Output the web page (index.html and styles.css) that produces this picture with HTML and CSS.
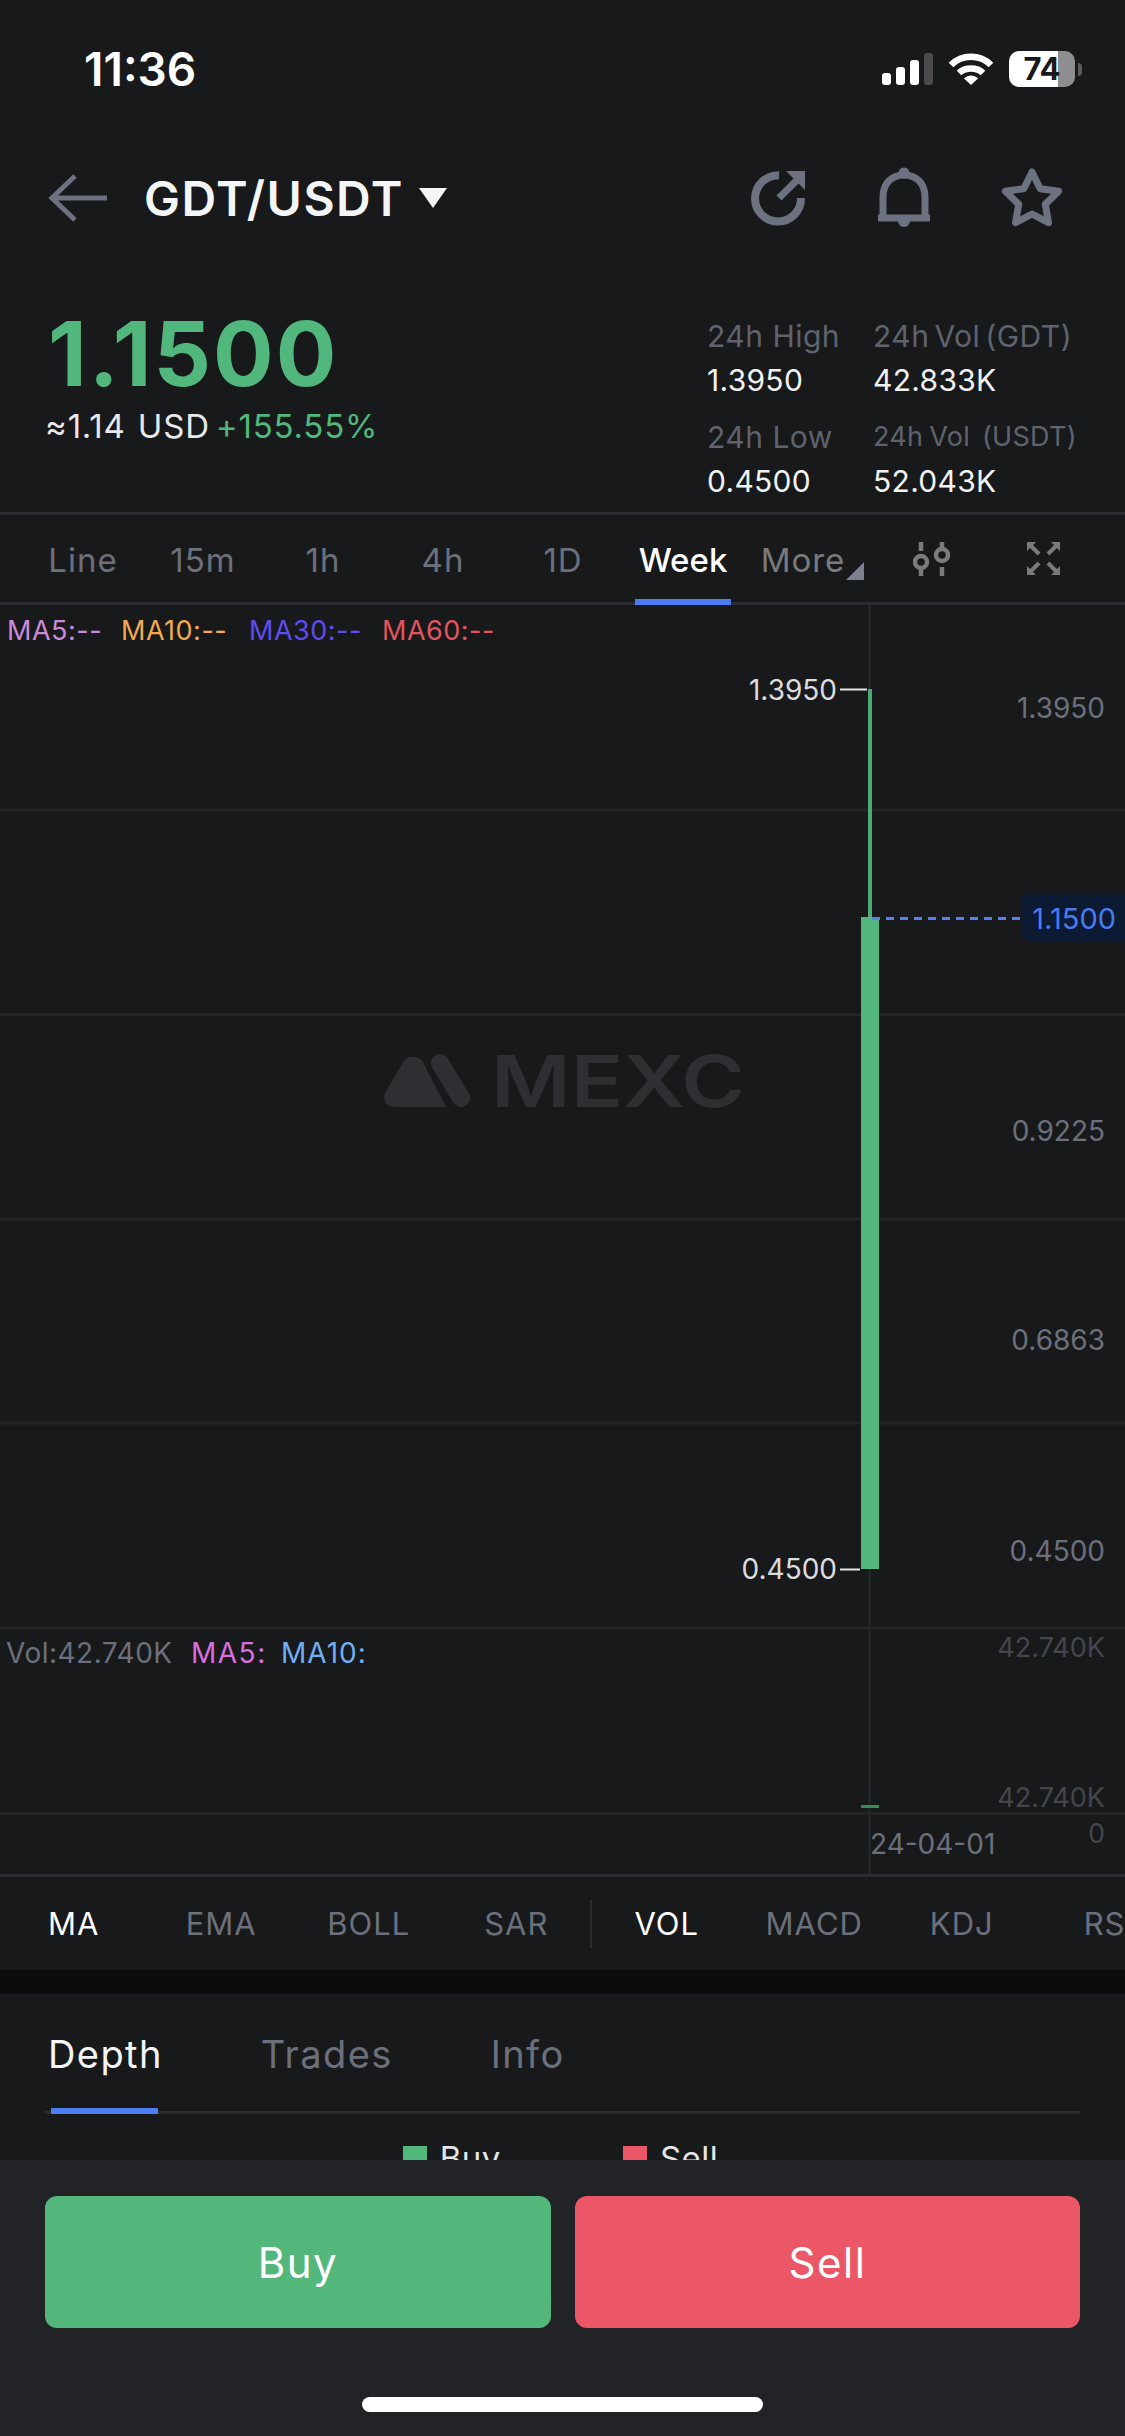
FILE: index.html
```html
<!DOCTYPE html>
<html lang="en">
<head>
    <meta charset="UTF-8">
    <meta name="viewport" content="width=device-width, initial-scale=1.0">
    <title>GDT/USDT</title>
    <link rel="stylesheet" href="styles.css">
</head>
<body>

<div class="status-bar">
    <span class="time">11:36</span>
    <div class="status-icons">
        <svg class="signal" width="51" height="32" viewBox="0 0 51 32">
            <rect x="0" y="20" width="9" height="12" rx="3" fill="#fff"/>
            <rect x="14" y="14" width="9" height="18" rx="3" fill="#fff"/>
            <rect x="28" y="7" width="9" height="25" rx="3" fill="#fff"/>
            <rect x="42" y="0" width="9" height="32" rx="3" fill="#4b4b4d"/>
        </svg>
        <svg class="wifi" width="46" height="34" viewBox="0 0 46 34" fill="none" stroke="#fff" stroke-width="6.5">
            <path d="M3 13 C14 2 32 2 43 13"/>
            <path d="M11 21 C17 15 29 15 35 21"/>
            <path d="M16 26.500 L23 33 L30 26.500 C26 22.500 20 22.500 16 26.500 Z" fill="#fff" stroke="none"/>
        </svg>
        <div class="battery">
            <div class="battery-body"><span>74</span></div>
            <div class="battery-nub"></div>
        </div>
    </div>
</div>

<header class="topbar">
    <svg class="back" width="60" height="50" viewBox="0 0 60 50" fill="none" stroke="#6c7280" stroke-width="5">
        <path d="M27 3 L4 25 L27 47"/>
        <path d="M4 25 H59"/>
    </svg>
    <h1>GDT/USDT</h1>
    <span class="caret"></span>
    <div class="actions">
        <svg width="56" height="56" viewBox="0 0 56 56" fill="none" stroke="#6c7280" stroke-width="8">
            <path d="M28 5.500 A23 23 0 1 0 50 28"/>
            <path d="M28 28 L46 10" stroke-width="7"/>
            <path d="M35 1 H54 V20 Z" fill="#6c7280" stroke="none"/>
        </svg>
        <svg width="54" height="62" viewBox="0 0 54 62" fill="none" stroke="#6c7280" stroke-width="7">
            <circle cx="27" cy="6" r="5.500" fill="#6c7280" stroke="none"/>
            <circle cx="27" cy="54" r="6" fill="#6c7280" stroke="none"/>
            <path d="M6 50 V30 C6 16 15 8 27 8 C39 8 48 16 48 30 V50"/>
            <path d="M1 51 H53"/>
        </svg>
        <svg width="62" height="60" viewBox="1001 168 62 60" fill="none" stroke="#6c7280" stroke-width="7" stroke-linejoin="round">
            <path d="M1032 172 L1040.200 188.700 L1058.600 191.300 L1045.300 204.300 L1048.500 222.700 L1032 214 L1015.500 222.700 L1018.700 204.300 L1005.400 191.300 L1023.800 188.700 Z"/>
        </svg>
    </div>
</header>

<section class="summary">
    <div class="price-box">
        <div class="price">1.1500</div>
        <div class="price-sub">≈1.14&nbsp; USD <span class="up">+155.55%</span></div>
    </div>
    <div class="stats">
        <div class="stat"><span class="stat-label">24h High</span><span class="stat-value">1.3950</span></div>
        <div class="stat"><span class="stat-label tight">24h Vol (GDT)</span><span class="stat-value">42.833K</span></div>
        <div class="stat"><span class="stat-label">24h Low</span><span class="stat-value">0.4500</span></div>
        <div class="stat"><span class="stat-label small">24h Vol&nbsp; (USDT)</span><span class="stat-value">52.043K</span></div>
    </div>
</section>

<nav class="periods">
    <span class="period">Line</span>
    <span class="period">15m</span>
    <span class="period">1h</span>
    <span class="period">4h</span>
    <span class="period">1D</span>
    <span class="period active">Week</span>
    <span class="period more">More</span>
    <svg class="tool" width="37" height="34" viewBox="0 0 37 34" fill="none" stroke="#7b7b7d" stroke-width="4.500">
        <path d="M8 0 V9"/>
        <circle cx="8" cy="20" r="6"/>
        <path d="M8 26 V34"/>
        <path d="M29 0 V7"/>
        <circle cx="29" cy="13" r="6"/>
        <path d="M29 25 V34"/>
    </svg>
    <svg class="tool expand" width="33" height="33" viewBox="0 0 33 33" fill="none" stroke="#7b7b7d" stroke-width="4">
        <path d="M3 3 L12 12 M29 4 L21 12 M12 21 L4 29 M21 21 L30 30"/>
        <path d="M0 0 H9 L0 9 Z M33 0 V9 L24 0 Z M0 33 V24 L9 33 Z M33 33 H24 L33 24 Z" fill="#7b7b7d" stroke="none"/>
    </svg>
</nav>

<svg class="chart" width="1125" height="1269" viewBox="0 605 1125 1269">
    <g class="grid">
        <path d="M0 810 H1125 M0 1014.500 H1125 M0 1219 H1125 M0 1423 H1125 M0 1628 H1125 M0 1813.500 H1125"/>
    </g>
    <path class="crosshair" d="M869.500 605 V1874"/>

    <g class="watermark">
        <path d="M402 1064 a12 12 0 0 1 22 0 L446 1107 H394 a10 10 0 0 1 -9 -14 Z"/>
        <path class="mark-pill" d="M440 1063 L461 1098"/>
        <text x="491" y="1107" class="mark-text" textLength="254" lengthAdjust="spacingAndGlyphs">MEXC</text>
    </g>

    <text x="7" y="640" class="legend ma5">MA5:--</text>
    <text x="121" y="640" class="legend ma10">MA10:--</text>
    <text x="249" y="640" class="legend ma30">MA30:--</text>
    <text x="382" y="640" class="legend ma60">MA60:--</text>

    <!-- candle -->
    <rect x="868" y="689" width="4" height="229" fill="#4cab74"/>
    <rect x="861" y="917" width="18" height="652" fill="#52b77c"/>
    <path class="tick" d="M840 689.500 H867 M840 1569.500 H860"/>
    <text x="837" y="700" class="hilo">1.3950</text>
    <text x="837" y="1579" class="hilo">0.4500</text>

    <path class="last-line" d="M872 918.500 H1021"/>
    <rect x="1021" y="894" width="110" height="47" rx="7" fill="#0d1a33"/>
    <text x="1116" y="929" class="axis last-price">1.1500</text>

    <text x="1105" y="718" class="axis">1.3950</text>
    <text x="1105" y="1141" class="axis">0.9225</text>
    <text x="1105" y="1350" class="axis">0.6863</text>
    <text x="1105" y="1561" class="axis">0.4500</text>

    <text x="6" y="1663" class="vol-legend vol">Vol:42.740K</text>
    <text x="191" y="1663" class="vol-legend vol-ma5">MA5:</text>
    <text x="281" y="1663" class="vol-legend vol-ma10">MA10:</text>

    <text x="1105" y="1657" class="axis dim">42.740K</text>
    <text x="1105" y="1807" class="axis dim">42.740K</text>
    <rect x="861" y="1805" width="18" height="3" fill="#3b8a5c"/>
    <text x="1105" y="1843" class="axis dim">0</text>
    <text x="870" y="1854" class="axis date">24-04-01</text>
</svg>

<nav class="indicators">
    <span class="indicator active">MA</span>
    <span class="indicator">EMA</span>
    <span class="indicator">BOLL</span>
    <span class="indicator">SAR</span>
    <span class="indicator-sep"></span>
    <span class="indicator active">VOL</span>
    <span class="indicator">MACD</span>
    <span class="indicator">KDJ</span>
    <span class="indicator">RSI</span>
</nav>

<section class="depth">
    <div class="depth-tabs">
        <span class="depth-tab active">Depth</span>
        <span class="depth-tab">Trades</span>
        <span class="depth-tab">Info</span>
    </div>
    <div class="depth-legend">
        <span class="key"><i class="swatch buy"></i>Buy</span>
        <span class="key"><i class="swatch sell"></i>Sell</span>
    </div>
</section>

<footer class="footer">
    <div class="trade-btns">
        <button type="button" class="trade-btn buy">Buy</button>
        <button type="button" class="trade-btn sell">Sell</button>
    </div>
    <div class="home-bar"></div>
</footer>

</body>
</html>
```

FILE: styles.css
```css
* {
    margin: 0;
    padding: 0;
    box-sizing: border-box;
}

body {
    width: 1125px;
    height: 2436px;
    overflow: hidden;
    display: flex;
    flex-direction: column;
    background-color: #18191b;
    color: #fff;
    font-family: 'Inter', 'Liberation Sans', sans-serif;
}

svg {
    display: block;
    flex-shrink: 0;
}

/* status bar */
.status-bar {
    height: 138px;
    flex-shrink: 0;
    display: flex;
    justify-content: space-between;
    align-items: center;
    padding: 0 43px 0 84px;
}

.time {
    font-size: 46px;
    font-weight: 600;
}

.status-icons {
    display: flex;
    align-items: center;
}

.wifi {
    margin-left: 15px;
}

.battery {
    display: flex;
    align-items: center;
    margin-left: 15px;
}

.battery-body {
    width: 66px;
    height: 36px;
    border-radius: 10px;
    background: linear-gradient(to right, #fff 74%, #8e8e90 74%);
    color: #18191b;
    font-size: 31px;
    font-weight: 700;
    line-height: 36px;
    text-align: center;
}

.battery-nub {
    width: 4px;
    height: 13px;
    margin-left: 3px;
    border-radius: 0 4px 4px 0;
    background-color: #5c5c5e;
}

/* top bar */
.topbar {
    height: 120px;
    flex-shrink: 0;
    display: flex;
    align-items: center;
    padding-left: 48px;
}

.topbar h1 {
    margin-left: 36px;
    font-size: 48px;
    font-weight: 600;
    letter-spacing: 1.5px;
    color: #f4f5f7;
}

.caret {
    width: 0;
    height: 0;
    margin-left: 15px;
    border-left: 14px solid transparent;
    border-right: 14px solid transparent;
    border-top: 20px solid #f4f5f7;
}

.actions {
    display: flex;
    align-items: center;
    gap: 70px;
    margin-left: auto;
    padding-right: 62px;
}

/* price summary */
.summary {
    height: 257px;
    flex-shrink: 0;
    display: flex;
    justify-content: space-between;
    padding: 0 0 0 48px;
    border-bottom: 3px solid #2a2c32;
}

.price {
    margin-top: 50px;
    font-size: 90px;
    font-weight: 700;
    letter-spacing: 2px;
    line-height: 92px;
    color: #52b77c;
}

.price-sub {
    margin: 6px 0 0 -3px;
    font-size: 33px;
    letter-spacing: 0.8px;
    word-spacing: -4px;
    line-height: 40px;
    color: #e8e9ec;
}

.up {
    color: #52b77c;
}

.stats {
    width: 418px;
    padding-top: 60px;
    display: grid;
    grid-template-columns: 166px 252px;
    grid-auto-rows: 101px;
    align-content: start;
}

.stat {
    display: flex;
    flex-direction: column;
    gap: 8px;
    white-space: nowrap;
}

.stat-label {
    font-size: 30px;
    letter-spacing: 0.5px;
    line-height: 36px;
    color: #5f636e;
}

.stat-label.tight {
    word-spacing: -4px;
}

.stat-label.small {
    font-size: 27px;
    letter-spacing: 0.3px;
    word-spacing: -2px;
}

.stat-value {
    font-size: 30px;
    letter-spacing: 0.3px;
    line-height: 36px;
    color: #f0f1f3;
}

/* period tabs */
.periods {
    height: 90px;
    flex-shrink: 0;
    display: flex;
    align-items: center;
    padding-left: 23px;
    border-bottom: 3px solid #2a2c32;
}

.period {
    position: relative;
    width: 120px;
    height: 87px;
    line-height: 90px;
    text-align: center;
    font-size: 33px;
    letter-spacing: 1px;
    color: #6c707b;
}

.period.active {
    color: #fff;
    font-weight: 500;
    letter-spacing: 0;
}

.period.active::after {
    content: "";
    position: absolute;
    left: 12px;
    right: 12px;
    bottom: -3px;
    height: 6px;
    background-color: #4d7df2;
}

.period.more {
    color: #7b7b7d;
}

.period.more::after {
    content: "";
    position: absolute;
    right: -1px;
    bottom: 22px;
    border-left: 18px solid transparent;
    border-bottom: 18px solid #7a8090;
}

.tool {
    margin-left: 50px;
}

.tool.expand {
    margin-left: 77px;
}

/* chart */
.chart {
    flex-shrink: 0;
}

.grid path {
    stroke: #232427;
    stroke-width: 3;
}

.crosshair {
    stroke: #26282c;
    stroke-width: 2;
}

.watermark {
    fill: #2e2f32;
}

.mark-pill {
    fill: none;
    stroke: #2e2f32;
    stroke-width: 18;
    stroke-linecap: round;
}

.mark-text {
    font-size: 72px;
    font-weight: 600;
}

.legend {
    font-size: 27px;
    letter-spacing: 0.5px;
}

.vol-legend {
    font-size: 28px;
    letter-spacing: 1px;
}

.ma5 { fill: #c98ad9; }
.ma10 { fill: #f2a950; }
.ma30 { fill: #5e4df0; }
.ma60 { fill: #e0555f; }
.vol { fill: #6c707b; letter-spacing: 0.5px; }
.vol-ma5 { fill: #d96fdc; letter-spacing: 1.500px; }
.vol-ma10 { fill: #6fb0f5; }

.tick {
    stroke: #e6e6e8;
    stroke-width: 2;
}

.hilo {
    font-size: 28px;
    fill: #dcdcde;
    text-anchor: end;
}

.last-line {
    stroke: #5580f5;
    stroke-width: 3;
    stroke-dasharray: 8 6;
}

.axis {
    font-size: 28px;
    fill: #6c707b;
    text-anchor: end;
}

.axis.last-price {
    font-size: 29px;
    fill: #4a7bf0;
}

.axis.dim {
    font-size: 27px;
    fill: #44464c;
}

.axis.date {
    text-anchor: start;
}

/* indicator tabs */
.indicators {
    height: 96px;
    flex-shrink: 0;
    display: flex;
    align-items: center;
    overflow: hidden;
    border-top: 3px solid #2a2c32;
}

.indicator {
    flex: 0 0 147.5px;
    text-align: center;
    font-size: 31px;
    letter-spacing: 1px;
    color: #6c707b;
}

.indicator.active {
    color: #fff;
}

.indicator-sep {
    flex: 0 0 2px;
    height: 48px;
    margin: 0 1px 0 0;
    background-color: #2a2c32;
}

/* depth panel */
.depth {
    height: 190px;
    flex-shrink: 0;
    overflow: hidden;
    border-top: 24px solid #0b0d0d;
    padding: 0 45px;
}

.depth-tabs {
    display: flex;
    gap: 98px;
    height: 120px;
    padding: 36px 0 0 3px;
    border-bottom: 3px solid #2a2c32;
}

.depth-tab {
    position: relative;
    height: 81px;
    font-size: 38px;
    letter-spacing: 1.4px;
    line-height: 48px;
    color: #6c707b;
}

.depth-tab.active {
    color: #f4f5f7;
}

.depth-tab.active::after {
    content: "";
    position: absolute;
    left: 3px;
    right: 5px;
    bottom: -3px;
    height: 6px;
    background-color: #4d7df2;
}

.depth-legend {
    display: flex;
    justify-content: center;
    gap: 122px;
    padding-top: 26px;
    padding-right: 4px;
}

.key {
    display: flex;
    align-items: center;
    gap: 13px;
    font-size: 33px;
    letter-spacing: 0.5px;
    line-height: 36px;
    color: #e6e6e8;
}

.swatch {
    width: 24px;
    height: 24px;
}

.swatch.buy {
    background-color: #52b77c;
}

.swatch.sell {
    background-color: #ec5768;
}

/* bottom bar */
.footer {
    flex: 1;
    display: flex;
    flex-direction: column;
    align-items: center;
    background-color: #222327;
}

.trade-btns {
    width: 100%;
    display: grid;
    grid-template-columns: 506px 505px;
    gap: 24px;
    padding: 36px 45px 0;
}

.trade-btn {
    height: 132px;
    border: none;
    border-radius: 12px;
    font-family: inherit;
    font-size: 42px;
    font-weight: 400;
    letter-spacing: 1.5px;
    color: #fff;
}

.trade-btn.buy {
    background-color: #53b77c;
}

.trade-btn.sell {
    background-color: #eb5767;
}

.home-bar {
    width: 401px;
    height: 15px;
    margin-top: 69px;
    border-radius: 8px;
    background-color: #fff;
}
```
